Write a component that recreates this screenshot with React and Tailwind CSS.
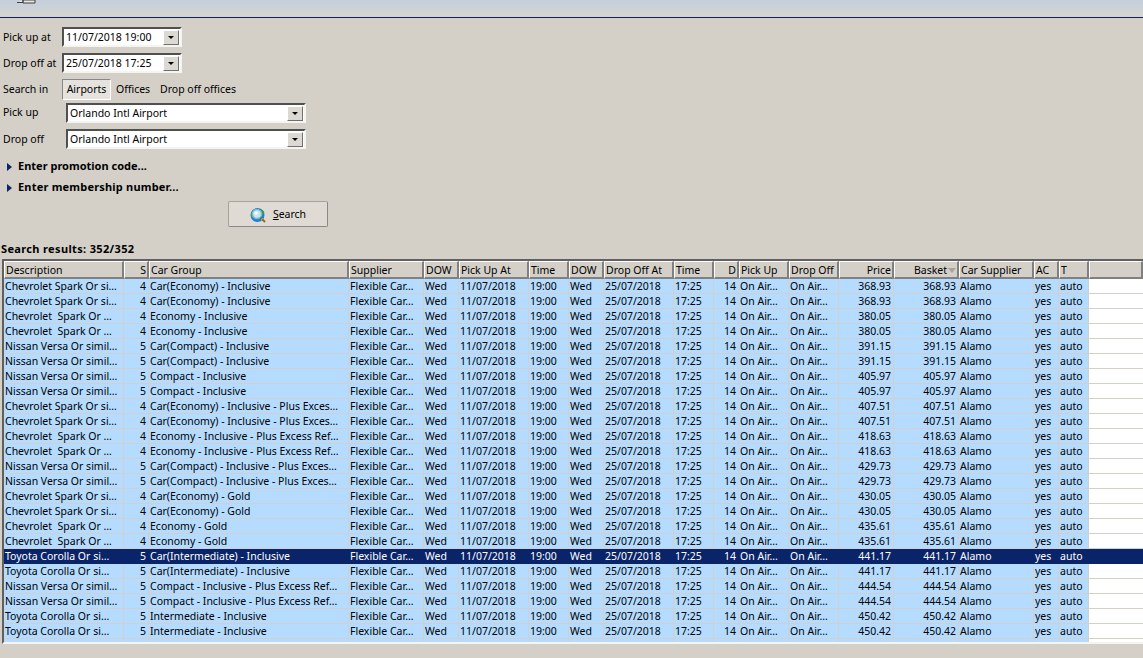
const A = ["Chevrolet Spark Or si…", "Chevrolet  Spark Or …", "Nissan Versa Or simil…", "Toyota Corolla Or si…"];
const raw = [
  [0, 4, "Car(Economy) - Inclusive", "368.93"],
  [0, 4, "Car(Economy) - Inclusive", "368.93"],
  [1, 4, "Economy - Inclusive", "380.05"],
  [1, 4, "Economy - Inclusive", "380.05"],
  [2, 5, "Car(Compact) - Inclusive", "391.15"],
  [2, 5, "Car(Compact) - Inclusive", "391.15"],
  [2, 5, "Compact - Inclusive", "405.97"],
  [2, 5, "Compact - Inclusive", "405.97"],
  [0, 4, "Car(Economy) - Inclusive - Plus Exces…", "407.51"],
  [0, 4, "Car(Economy) - Inclusive - Plus Exces…", "407.51"],
  [1, 4, "Economy - Inclusive - Plus Excess Ref…", "418.63"],
  [1, 4, "Economy - Inclusive - Plus Excess Ref…", "418.63"],
  [2, 5, "Car(Compact) - Inclusive - Plus Exces…", "429.73"],
  [2, 5, "Car(Compact) - Inclusive - Plus Exces…", "429.73"],
  [0, 4, "Car(Economy) - Gold", "430.05"],
  [0, 4, "Car(Economy) - Gold", "430.05"],
  [1, 4, "Economy - Gold", "435.61"],
  [1, 4, "Economy - Gold", "435.61"],
  [3, 5, "Car(Intermediate) - Inclusive", "441.17", true],
  [3, 5, "Car(Intermediate) - Inclusive", "441.17"],
  [2, 5, "Compact - Inclusive - Plus Excess Ref…", "444.54"],
  [2, 5, "Compact - Inclusive - Plus Excess Ref…", "444.54"],
  [3, 5, "Intermediate - Inclusive", "450.42"],
  [3, 5, "Intermediate - Inclusive", "450.42"],
  [2, 5, "Car(Compact) - Gold", "477.00"],
];
const gridCols = "grid grid-cols-[120px_25px_200px_75px_35px_70px_40px_35px_70px_40px_25px_50px_50px_55px_65px_75px_25px_30px_1fr]";
const headers = [
  ["Description"], ["S", 1], ["Car Group"], ["Supplier"], ["DOW"], ["Pick Up At"], ["Time"], ["DOW"],
  ["Drop Off At"], ["Time"], ["D", 1], ["Pick Up"], ["Drop Off"], ["Price", 1], ["Basket", 2], ["Car Supplier"], ["AC"], ["T"], [""],
];
function Head({ label, align }) {
  return (
    <div className={"h-[18px] pt-[2px] border-t border-l border-t-white border-l-white border-r-2 border-b-2 border-r-[#808080] border-b-[#808080] bg-[#d4d0c8] flex items-center leading-none overflow-hidden whitespace-nowrap " + (align ? "justify-end pr-[1px]" : "pl-[1px]")}>
      <span>{label}</span>
      {align === 2 && <span className="w-0 h-0 ml-[1px] border-l-[4px] border-r-[4px] border-t-[5px] border-l-transparent border-r-transparent border-t-[#a8a49c]" />}
    </div>
  );
}
function Cell({ children, right, sel }) {
  return (
    <div className={"h-[15px] flex items-center overflow-hidden whitespace-pre pl-[1px] border-r border-b leading-none " + (right ? "justify-end pr-[2px] " : "") + (sel ? "bg-[#0a246a] text-white border-[#0a246a]" : "bg-[#b5dcff] text-black border-[#d0d0d0]")}>
      {children}
    </div>
  );
}
function Row({ r }) {
  const [d, s, g, p, sel] = r;
  const cells = [
    [A[d]], [s, 1], [g], ["Flexible Car…"], ["Wed"], ["11/07/2018"], ["19:00"], ["Wed"], ["25/07/2018"], ["17:25"], ["14", 1],
    ["On Air…"], ["On Air…"], [p, 1], [p, 1], ["Alamo"], ["yes"], ["auto"],
  ];
  return (
    <div className={gridCols}>
      {cells.map((c, i) => <Cell key={i} right={c[1]} sel={sel}>{c[0]}</Cell>)}
      <div className={"h-[15px] border-b " + (sel ? "bg-[#0a246a] border-[#0a246a]" : "bg-white border-[#d4d0c8]")} />
    </div>
  );
}
function Arrow() {
  return <span className="w-0 h-0 border-l-[3px] border-r-[3px] border-t-[3px] border-l-transparent border-r-transparent border-t-black" />;
}
function DropBtn() {
  return (
    <div className="w-[16px] h-[15px] bg-[#dcd8d2] border border-t-white border-l-white border-r-[#707070] border-b-[#707070] flex items-center justify-center">
      <Arrow />
    </div>
  );
}
function Sunken({ className, children }) {
  return (
    <div className={"h-[20px] bg-white border-2 border-t-[#505050] border-l-[#505050] border-r-[#f4f4f0] border-b-[#f4f4f0] flex items-center justify-between pl-[2px] pr-[1px] " + className}>
      <span className="leading-none whitespace-nowrap">{children}</span>
      <DropBtn />
    </div>
  );
}
function Caret() {
  return <span className="w-0 h-0 border-t-[4px] border-b-[4px] border-l-[5px] border-t-transparent border-b-transparent border-l-[#0a246a]" />;
}
function SearchIcon() {
  return (
    <svg width="17" height="16" viewBox="0 0 17 16" className="shrink-0">
      <circle cx="7.5" cy="8" r="7" fill="#1d7fd6" />
      <path d="M10 2c2 .5 4 2 4.500 4l-2.500 1.500L10.500 5z" fill="#2e9d3a" />
      <path d="M1 6c1-1 2-1 2.500 0L3 11 1.500 10z" fill="#3aa34a" />
      <circle cx="7" cy="7" r="4.600" fill="#c4e6ee" stroke="#7fb8cc" strokeWidth="1.500" />
      <circle cx="6" cy="6" r="1.800" fill="#f2fbfd" />
      <path d="M10.500 10.500L15 15" stroke="#8a6a20" strokeWidth="2" />
      <path d="M11 13l2-2" stroke="#d9a520" strokeWidth="1" />
    </svg>
  );
}
export default function App() {
  return (
    <div className="w-[1143px] h-[658px] overflow-hidden bg-[#d4d0c8] text-black text-[10.5px] font-['Noto_Sans',sans-serif] flex flex-col">
      <div className="h-[18px] shrink-0 border-b border-[#0a246a] bg-gradient-to-b from-[#c4cfdd] to-[#d6d5d0] pl-[17px]">
        <svg width="22" height="4" viewBox="0 0 22 4" className="block">
          <path d="M0 2.500H6V0M6 0h12v3H6z" fill="#e8e8e8" stroke="#404040" />
        </svg>
      </div>
      <div className="h-[222px] shrink-0 flex flex-col pl-[3px] pt-[7px]">
        <div className="flex items-center h-[24px]">
          <span className="w-[59px] pt-[2px]">Pick up at</span>
          <Sunken className="w-[120px]">11/07/2018 19:00</Sunken>
        </div>
        <div className="flex items-center h-[26px] mt-[1px]">
          <span className="w-[59px] pt-[2px]">Drop off at</span>
          <Sunken className="w-[120px]">25/07/2018 17:25</Sunken>
        </div>
        <div className="flex items-center h-[22px] mt-[2px]">
          <span className="w-[59px] pt-[2px]">Search in</span>
          <span className="h-[21px] w-[49px] pt-[2px] flex items-center justify-center bg-[#e6e3de] border border-t-[#888] border-l-[#888] border-r-white border-b-white">Airports</span>
          <span className="ml-[5px] w-[44px] pt-[2px]">Offices</span>
          <span className="pt-[2px]">Drop off offices</span>
        </div>
        <div className="flex items-center h-[26px]">
          <span className="w-[63px]">Pick up</span>
          <Sunken className="w-[240px]">Orlando Intl Airport</Sunken>
        </div>
        <div className="flex items-center h-[26px]">
          <span className="w-[63px] pt-[2px]">Drop off</span>
          <Sunken className="w-[240px]">Orlando Intl Airport</Sunken>
        </div>
        <div className="flex items-center h-[21px] mt-[4px] pl-[4px] gap-[6px] font-bold text-[11px]"><Caret /><span>Enter promotion code...</span></div>
        <div className="flex items-center h-[21px] pl-[4px] gap-[6px] font-bold text-[11px]"><Caret /><span className="tracking-[0.2px]">Enter membership number...</span></div>
        <div className="pl-[225px] mt-[3px]">
          <div className="w-[100px] h-[26px] pt-[1px] bg-[#e0dad4] border border-[#a8a49c] border-r-[#888] border-b-[#888] rounded-[2px] flex items-center justify-center gap-[6px]">
            <SearchIcon />
            <span><span className="underline">S</span>earch</span>
          </div>
        </div>
      </div>
      <div className="h-[18px] shrink-0 flex items-center font-bold text-[11px] tracking-[0.35px] pl-[1px]">Search results: 352/352</div>
      <div className="h-[385px] shrink-0 mt-[1px] ml-[2px] border-t-2 border-l-2 border-t-[#606060] border-l-[#606060] border-b-2 border-b-[#f4f4f0] overflow-hidden bg-white">
        <div className={gridCols}>
          {headers.map((h, i) => <Head key={i} label={h[0]} align={h[1]} />)}
        </div>
        {raw.map((r, i) => <Row key={i} r={r} />)}
      </div>
    </div>
  );
}
